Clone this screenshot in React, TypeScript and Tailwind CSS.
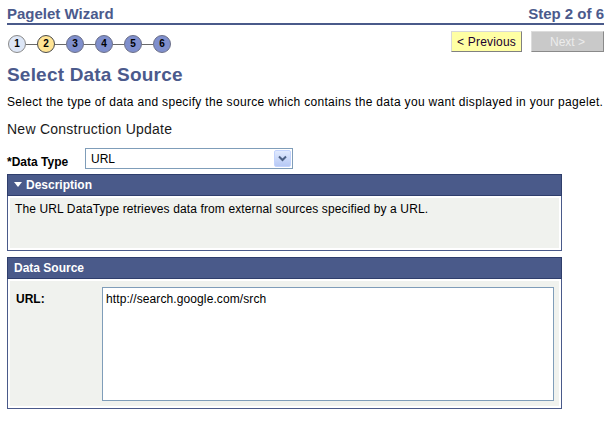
import React from 'react';

const steps = [1, 2, 3, 4, 5, 6];
const current = 2;

function StepDot({ n }: { n: number }) {
  // visited / current / upcoming
  const tone =
    n < current
      ? 'bg-[#dde6f6] border-[#8a8a8a]'
      : n === current
        ? 'bg-[#ffe494] border-[#4a4a4a]'
        : 'bg-[#7f8fcd] border-[#6b6f88]';
  return (
    <div
      className={`flex h-[18px] w-[18px] items-center justify-center rounded-full border text-[10px] font-bold leading-none text-black ${tone}`}
    >
      {n}
    </div>
  );
}

function PanelHeader({ title, toggle }: { title: string; toggle?: boolean }) {
  return (
    <div className="flex h-[22px] items-center border border-[#2f3e6c] bg-[#4a5a8a] pl-[6px] text-[12px] font-bold leading-[14px] text-white">
      {toggle && (
        <svg width="8" height="6" viewBox="0 0 8 6" className="mr-[4px]">
          <path d="M0 0 H8 L4 5 Z" fill="#ffffff" />
        </svg>
      )}
      {title}
    </div>
  );
}

export default function App() {
  return (
    <div className="h-[421px] w-[611px] overflow-hidden bg-white px-[7px] font-['Liberation_Sans',Arial,sans-serif] text-black">
      {/* Title bar */}
      <div className="flex h-[25px] items-end justify-between border-b-2 border-[#4a5a8a] pb-[1px] text-[15px] font-bold leading-[17px] text-[#4b5a8c]">
        <span>Pagelet Wizard</span>
        <span>Step 2 of 6</span>
      </div>

      {/* Step tracker + navigation */}
      <div className="mt-[6px] flex items-start justify-between">
        <div className="mt-[4px] flex items-center pl-[1px]">
          {steps.map((n, i) => (
            <React.Fragment key={n}>
              <StepDot n={n} />
              {i < steps.length - 1 && <div className="h-px w-[11px] bg-[#6a6a6a]" />}
            </React.Fragment>
          ))}
        </div>
        <div className="flex gap-[9px]">
          <button className="h-[21px] w-[71px] border border-b-[#808080] border-l-[#d8d8d8] border-r-[#808080] border-t-[#d8d8d8] bg-[#ffffa4] text-[12px] leading-none tracking-[0.2px] text-[#200030]">
            &lt; Previous
          </button>
          <button className="h-[21px] w-[73px] border border-b-[#8a8a8a] border-l-[#dcdcdc] border-r-[#8a8a8a] border-t-[#dcdcdc] bg-[#c9c9c9] text-[12px] leading-none text-[#ececec]">
            Next &gt;
          </button>
        </div>
      </div>

      <h1 className="mt-[10px] text-[19px] font-bold leading-[23px] tracking-[0.2px] text-[#4b5a8c]">Select Data Source</h1>
      <p className="mt-[9px] whitespace-nowrap text-[12px] leading-[14px] tracking-[0.32px]">
        Select the type of data and specify the source which contains the data you want displayed in your pagelet.
      </p>
      <p className="mt-[12px] text-[14px] leading-[17px] tracking-[0.25px] text-[#1a1a1a]">New Construction Update</p>

      {/* Data type picker */}
      <div className="mt-[10px] flex items-end">
        <span className="w-[78px] text-[12px] font-bold leading-[14px]">*Data Type</span>
        <div className="flex h-[21px] w-[208px] items-center justify-between border border-[#7f9db9] bg-white pl-[5px] pr-[1px]">
          <span className="text-[12px] leading-[14px]">URL</span>
          <div className="flex h-[17px] w-[17px] items-center justify-center rounded-[2px] border border-[#c3d3fd] bg-gradient-to-b from-[#e1eafe] to-[#b7c9f5]">
            <svg width="9" height="7" viewBox="0 0 9 7">
              <path d="M1 1.5 L4.5 5 L8 1.5" stroke="#4d6185" strokeWidth="2" fill="none" />
            </svg>
          </div>
        </div>
      </div>

      {/* Description */}
      <div className="mt-[5px] w-[555px]">
        <PanelHeader title="Description" toggle />
        <div className="border-x border-b border-[#4a5a8a] bg-white p-[2px]">
          <div className="h-[50px] bg-[#f0f2ee] px-[5px] pt-[4px] text-[12px] leading-[14px] tracking-[0.12px]">
            The URL DataType retrieves data from external sources specified by a URL.
          </div>
        </div>
      </div>

      {/* Data source */}
      <div className="mt-[6px] w-[555px]">
        <PanelHeader title="Data Source" />
        <div className="border-x border-b border-[#4a5a8a] bg-white p-[2px]">
          <div className="flex h-[125px] bg-[#f0f2ee] pt-[6px]">
            <span className="w-[92px] pl-[6px] pt-[5px] text-[12px] font-bold leading-[14px]">URL:</span>
            <div className="h-[114px] w-[452px] border border-[#7f9db9] bg-white px-[3px] pt-[4px] text-[12px] leading-[14px] tracking-[0.1px]">
              http://search.google.com/srch
            </div>
          </div>
        </div>
      </div>
    </div>
  );
}
